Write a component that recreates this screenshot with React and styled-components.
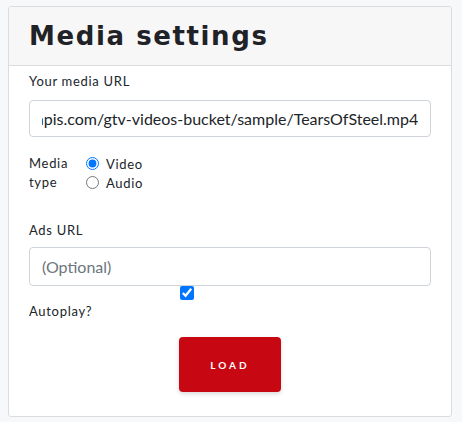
import React, { useEffect, useRef } from 'react';
import styled, { createGlobalStyle } from 'styled-components';

const GlobalStyle = createGlobalStyle`
	body {
		margin: 0;
		padding: 6px 10px 0 8px;
		background: #f7f8fa;
		font-family: Lato, "Open Sans", sans-serif;
		color: #212529;
	}
`;

const Card = styled.div`
	width: 444px;
	box-sizing: border-box;
	background: #fff;
	border: 1px solid #dcdcdc;
	border-radius: 3px;
`;

const Header = styled.div`
	background: #f7f7f7;
	border-bottom: 1px solid #dcdcdc;
	padding: 12px 20px 11px;
	border-radius: 3px 3px 0 0;
`;

const Title = styled.h1`
	margin: 0;
	font-family: "DejaVu Sans", sans-serif;
	font-weight: 700;
	font-size: 26px;
	letter-spacing: 1.6px;
	line-height: 35px;
	color: #1f2227;
`;

const Body = styled.div`
	padding: 5px 20px 24px;
	display: flex;
	flex-direction: column;
`;

const Label = styled.label`
	display: block;
	font-size: 13px;
	letter-spacing: 0.7px;
	line-height: 20px;
	color: #212529;
	margin-bottom: ${(p) => p.$gap || 0}px;
`;

const TextInput = styled.input`
	display: block;
	width: 100%;
	box-sizing: border-box;
	height: ${(p) => p.$h || 37}px;
	padding: 0 12px;
	border: 1px solid #ced4da;
	border-radius: 4px;
	font-family: Lato, "Open Sans", sans-serif;
	font-size: 16px;
	color: #212529;
	outline: none;
	&::placeholder {
		color: #6c757d;
	}
`;

const TypeRow = styled.div`
	display: flex;
	margin-top: 17px;
	margin-bottom: 28px;
`;

const TypeLabel = styled.div`
	width: 56px;
	font-size: 13px;
	letter-spacing: 0.7px;
	line-height: 19px;
`;

const Options = styled.div`
	display: flex;
	flex-direction: column;
`;

const Option = styled.label`
	display: flex;
	align-items: center;
	height: 19px;
	font-size: 13px;
	letter-spacing: 0.7px;
	input {
		margin: 0 7px 0 1px;
		width: 13px;
		height: 13px;
	}
`;

const CheckRow = styled.div`
	height: 15px;
	display: flex;
	align-items: flex-start;
	input {
		margin: 0 0 0 151px;
		width: 14px;
		height: 14px;
	}
`;

const LoadButton = styled.button`
	align-self: center;
	margin-top: 16px;
	width: 102px;
	height: 55px;
	border: none;
	border-radius: 4px;
	background: #c70711;
	color: #fff;
	font-family: Lato, sans-serif;
	font-weight: 700;
	font-size: 10px;
	letter-spacing: 3px;
	box-shadow: 0 2px 4px rgba(0, 0, 0, 0.15);
	cursor: pointer;
`;

const App = () => {
	const urlRef = useRef(null);

	useEffect(() => {
		// show the tail of the url like the browser does after typing
		if (urlRef.current) urlRef.current.scrollLeft = urlRef.current.scrollWidth;
	}, []);

	return (
		<>
			<GlobalStyle />
			<Card>
				<Header>
					<Title>Media settings</Title>
				</Header>
				<Body>
					<Label htmlFor='media-url' $gap={9}>
						Your media URL
					</Label>
					<TextInput
						id='media-url'
						ref={urlRef}
						defaultValue='https://commondatastorage.googleapis.com/gtv-videos-bucket/sample/TearsOfSteel.mp4'
					/>
					<TypeRow>
						<TypeLabel>Media type</TypeLabel>
						<Options>
							<Option>
								<input type='radio' name='type' defaultChecked />
								Video
							</Option>
							<Option>
								<input type='radio' name='type' />
								Audio
							</Option>
						</Options>
					</TypeRow>
					<Label htmlFor='ads-url' $gap={7}>
						Ads URL
					</Label>
					<TextInput id='ads-url' $h={39} placeholder='(Optional)' />
					<CheckRow>
						<input type='checkbox' defaultChecked />
					</CheckRow>
					<Label>Autoplay?</Label>
					<LoadButton>LOAD</LoadButton>
				</Body>
			</Card>
		</>
	);
};

export default App;
